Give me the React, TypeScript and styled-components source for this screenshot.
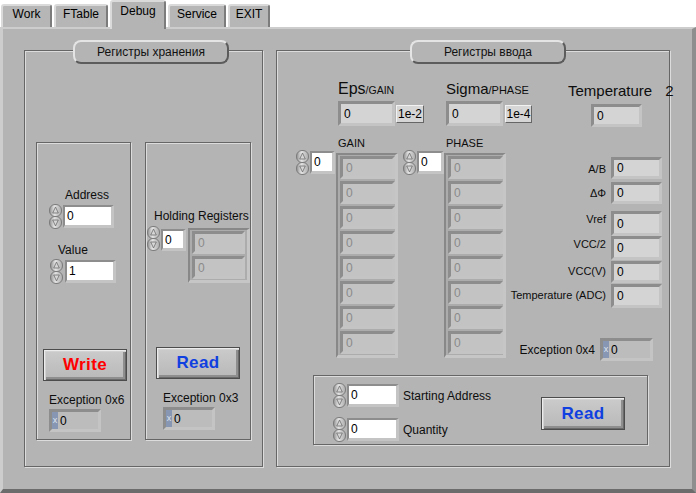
import React, { useId } from "react";
import styled, { createGlobalStyle } from "styled-components";

const PANEL = "#b4b4b4";

const GlobalStyle = createGlobalStyle`
  html, body { margin: 0; padding: 0; background: #ffffff; }
  body {
    font-family: "Liberation Sans", Arial, sans-serif;
    font-size: 12px;
    color: #000;
  }
  *, *::before, *::after { box-sizing: border-box; }
`;

// --- Tabs ---
const Screen = styled.div`
  width: 696px;
  height: 493px;
  display: flex;
  flex-direction: column;
  overflow: hidden;
`;

const TabBar = styled.div`
  height: 27px;
  display: flex;
  align-items: flex-end;
  gap: 2px;
  padding-left: 1px;
  position: relative;
  z-index: 2;
`;

const Tab = styled.div<{ $w: number; $active?: boolean }>`
  width: ${(p) => p.$w}px;
  height: ${(p) => (p.$active ? 29 : 23)}px;
  margin-bottom: ${(p) => (p.$active ? -2 : 0)}px;
  padding-top: ${(p) => (p.$active ? 2 : 1)}px;
  display: flex;
  justify-content: center;
  background: ${(p) => (p.$active ? PANEL : "#b6b6b6")};
  border: 2px solid;
  border-bottom: none;
  border-color: #dadada #7c7c7c transparent #dadada;
  border-radius: 3px 3px 0 0;
  font-size: 12px;
  line-height: 14px;
`;

// --- Panel & group boxes ---
const Panel = styled.div`
  position: relative;
  z-index: 1;
  width: 696px;
  height: 466px;
  background: ${PANEL};
  border-style: solid;
  border-width: 2px 4px 4px 3px;
  border-color: #cdcdcd #8e8e8e #6c6c6c #cdcdcd;
  display: flex;
  align-items: flex-start;
  gap: 13px;
  padding: 21px 0 0 21px;
`;

const Etched = styled.div<{ $w: number; $h: number; $ml?: number }>`
  position: relative;
  flex-shrink: 0;
  width: ${(p) => p.$w}px;
  height: ${(p) => p.$h}px;
  margin-left: ${(p) => p.$ml ?? 0}px;
  border: 1px solid #666666;
  box-shadow: inset 1px 1px 0 #dcdcdc, 1px 1px 0 #dcdcdc;
`;

const GroupTitle = styled.div<{ $left: number; $w: number }>`
  position: absolute;
  top: -11px;
  left: ${(p) => p.$left}px;
  width: ${(p) => p.$w}px;
  height: 24px;
  border-radius: 8px;
  background: ${PANEL};
  border: 2px solid;
  border-color: #e4e4e4 #5c5c5c #5c5c5c #e4e4e4;
  display: flex;
  align-items: center;
  justify-content: center;
  font-size: 12px;
  color: #111;
`;

const Stack = styled.div<{ $ml?: number }>`
  display: flex;
  flex-direction: column;
  align-items: flex-start;
  margin-left: ${(p) => p.$ml ?? 0}px;
`;

const Row = styled.div<{ $mt?: number; $ml?: number; $gap?: number; $align?: string }>`
  display: flex;
  align-items: ${(p) => p.$align ?? "center"};
  gap: ${(p) => p.$gap ?? 0}px;
  margin-top: ${(p) => p.$mt ?? 0}px;
  margin-left: ${(p) => p.$ml ?? 0}px;
`;

const Label = styled.div<{ $mt?: number; $ml?: number; $size?: number; $lh?: number }>`
  margin-top: ${(p) => p.$mt ?? 0}px;
  margin-left: ${(p) => p.$ml ?? 0}px;
  font-size: ${(p) => p.$size ?? 12}px;
  line-height: ${(p) => p.$lh ?? 14}px;
  white-space: nowrap;
  color: #0d0d0d;
`;

// --- Numeric fields ---
type Kind = "control" | "indicator" | "disabled" | "error";

const FIELD_BG: Record<Kind, string> = {
  control: "#ffffff",
  indicator: "#d4d4d4",
  disabled: "#c3c3c3",
  error: "#bcbcbc",
};

const Field = styled.div<{ $w: number; $h: number; $kind: Kind; $ml?: number; $mt?: number }>`
  flex-shrink: 0;
  width: ${(p) => p.$w}px;
  height: ${(p) => p.$h}px;
  margin-left: ${(p) => p.$ml ?? 0}px;
  margin-top: ${(p) => p.$mt ?? 0}px;
  border-style: solid;
  border-width: ${(p) => (p.$kind === "control" ? "2px 3px 3px 2px" : "3px")};
  border-color: #8d8d8d #c4c4c4 #c4c4c4 #8d8d8d;
  background: ${(p) => FIELD_BG[p.$kind]};
  color: ${(p) => (p.$kind === "disabled" ? "#8a8a8a" : "#000")};
  display: flex;
  align-items: center;
  padding-left: ${(p) => (p.$kind === "control" ? 2 : 3)}px;
  font-size: 12px;
  line-height: 14px;
`;

const XTag = styled.span`
  align-self: stretch;
  width: 6px;
  margin-left: -3px;
  margin-right: 2px;
  background: #8796b2;
  color: #dfe5ef;
  font-size: 9px;
  line-height: 16px;
  text-align: center;
`;

const UnitTag = styled.div<{ $w: number; $ml: number }>`
  width: ${(p) => p.$w}px;
  height: 18px;
  margin-left: ${(p) => p.$ml}px;
  background: #d6d6d6;
  border: 1px solid;
  border-color: #f2f2f2 #666666 #666666 #f2f2f2;
  display: flex;
  align-items: center;
  justify-content: center;
  font-size: 12px;
`;

const ArrayFrame = styled.div<{ $mt?: number; $ml?: number }>`
  width: 62px;
  margin-top: ${(p) => p.$mt ?? 0}px;
  margin-left: ${(p) => p.$ml ?? 0}px;
  display: flex;
  flex-direction: column;
  gap: 2px;
  padding: 1px 0 1px 2px;
  background: #acacac;
  border-style: solid;
  border-width: 2px 3px 3px 2px;
  border-color: #888888 #c6c6c6 #c6c6c6 #888888;
`;

const SpinnerSvg = styled.svg`
  flex-shrink: 0;
  display: block;
`;

function Spinner() {
  const id = "g" + useId().replace(/[^a-zA-Z0-9]/g, "");
  return (
    <SpinnerSvg width="13" height="25" viewBox="0 0 13 25">
      <defs>
        <linearGradient id={id} x1="0" x2="1" y1="0" y2="0">
          <stop offset="0" stopColor="#8f8f8f" />
          <stop offset="0.4" stopColor="#e4e4e4" />
          <stop offset="1" stopColor="#ababab" />
        </linearGradient>
      </defs>
      <rect x="0.5" y="0.5" width="12" height="12" rx="5.5" fill={`url(#${id})`} stroke="#7c7c7c" />
      <rect x="0.5" y="12.5" width="12" height="12" rx="5.5" fill={`url(#${id})`} stroke="#7c7c7c" />
      <path d="M6.5 3 L9.3 9 L3.7 9 Z" fill="#d6d6d6" stroke="#6c6c6c" strokeWidth="0.8" />
      <path d="M6.5 22 L9.3 16 L3.7 16 Z" fill="#d6d6d6" stroke="#6c6c6c" strokeWidth="0.8" />
    </SpinnerSvg>
  );
}

const Button = styled.div<{ $color: string; $w: number; $h: number; $mt?: number; $ml?: number; $mr?: number }>`
  flex-shrink: 0;
  width: ${(p) => p.$w}px;
  height: ${(p) => p.$h}px;
  margin-top: ${(p) => p.$mt ?? 0}px;
  margin-left: ${(p) => (p.$ml === undefined ? "auto" : `${p.$ml}px`)};
  margin-right: ${(p) => p.$mr ?? 0}px;
  display: flex;
  align-items: center;
  justify-content: center;
  background: linear-gradient(#cbcbcb, #b8b8b8);
  border: 1px solid #4c4c4c;
  box-shadow: inset 1px 1px 0 #ececec, inset 2px 2px 0 #d2d2d2,
    inset -1px -1px 0 #6a6a6a, inset -3px -3px 0 #8e8e8e;
  color: ${(p) => p.$color};
  font-weight: bold;
  font-size: 17px;
  letter-spacing: 0.4px;
`;

// --- Left group ---
const LeftBody = styled.div`
  display: flex;
  gap: 14px;
  padding: 91px 0 0 11px;
`;

// --- Right group ---
const Header = styled.div`
  display: flex;
  height: 48px;
  margin-top: 29px;
  padding-left: 61px;
`;

const Block = styled.div<{ $ml?: number }>`
  display: flex;
  flex-direction: column;
  align-items: flex-start;
  margin-left: ${(p) => p.$ml ?? 0}px;
`;

const BigLabel = styled.div<{ $size: number; $mt?: number }>`
  font-size: ${(p) => p.$size}px;
  line-height: 18px;
  margin-top: ${(p) => p.$mt ?? 0}px;
  white-space: nowrap;
  color: #0d0d0d;
`;

const Sub = styled.span<{ $ml?: number; $size?: number }>`
  font-size: ${(p) => p.$size ?? 10.5}px;
  margin-left: ${(p) => p.$ml ?? 0}px;
`;

const Body = styled.div`
  display: flex;
  align-items: flex-start;
  height: 238px;
  margin-top: 9px;
  padding-left: 19px;
`;

const IndColumn = styled.div`
  width: 155px;
  margin-left: 1px;
  padding-top: 20px;
  display: flex;
  flex-direction: column;
`;

const IndRow = styled.div<{ $mt: number; $pr?: number }>`
  display: flex;
  justify-content: flex-end;
  align-items: flex-start;
  gap: 5px;
  margin-top: ${(p) => p.$mt}px;
  padding-right: ${(p) => p.$pr ?? 0}px;
`;

const BottomInner = styled.div`
  display: flex;
  align-items: flex-start;
`;

const BottomControls = styled.div`
  display: flex;
  flex-direction: column;
  gap: 9px;
  padding: 7px 0 0 19px;
`;

function NumCtrl({ w, mt, ml, value = "0", gap = 1 }: { w: number; mt?: number; ml?: number; value?: string; gap?: number }) {
  return (
    <Row $mt={mt} $ml={ml} $gap={gap}>
      <Spinner />
      <Field $kind="control" $w={w} $h={23}>{value}</Field>
    </Row>
  );
}

function ErrInd({ w, mt, ml }: { w: number; mt?: number; ml?: number }) {
  return (
    <Field $kind="error" $w={w} $h={23} $mt={mt} $ml={ml}>
      <XTag>x</XTag>0
    </Field>
  );
}

function DataArray({ count, mt, ml }: { count: number; mt?: number; ml?: number }) {
  return (
    <ArrayFrame $mt={mt} $ml={ml}>
      {Array.from({ length: count }).map((_, i) => (
        <Field key={i} $kind="disabled" $w={55} $h={23}>0</Field>
      ))}
    </ArrayFrame>
  );
}

function IndexedArray({ title, fieldW, ml, gap }: { title: string; fieldW: number; ml?: number; gap: number }) {
  return (
    <Row $ml={ml} $align="flex-start">
      <NumCtrl w={fieldW} mt={13} />
      <Stack $ml={gap}>
        <Label $ml={2} $size={11} $lh={13}>{title}</Label>
        <DataArray count={8} mt={3} />
      </Stack>
    </Row>
  );
}

const indicators = [
  { label: "A/B", mt: 0, lmt: 5, h: 22 },
  { label: "ΔΦ", mt: 3, lmt: 4, h: 22 },
  { label: "Vref", mt: 7, lmt: 1, h: 25 },
  { label: "VCC/2", mt: 0, lmt: 1, h: 24 },
  { label: "VCC(V)", mt: 1, lmt: 3, h: 22 },
  { label: "Temperature (ADC)", mt: 1, lmt: 4, h: 24 },
];

export default function App() {
  return (
    <>
      <GlobalStyle />
      <Screen>
        <TabBar>
          <Tab $w={51}>Work</Tab>
          <Tab $w={54}>FTable</Tab>
          <Tab $w={56} $active>Debug</Tab>
          <Tab $w={58}>Service</Tab>
          <Tab $w={42}>EXIT</Tab>
        </TabBar>
        <Panel>
          {/* Регистры хранения */}
          <Etched $w={239} $h={417}>
            <GroupTitle $left={48} $w={156}>Регистры хранения</GroupTitle>
            <LeftBody>
              <Etched $w={95} $h={298}>
                <Stack>
                  <Label $mt={45} $ml={28}>Address</Label>
                  <NumCtrl w={51} mt={2} ml={12} />
                  <Label $mt={14} $ml={21}>Value</Label>
                  <NumCtrl w={51} mt={2} ml={13} value="1" gap={2} />
                  <Button $color="#ff0000" $w={84} $h={32} $mt={65} $ml={6}>Write</Button>
                  <Label $mt={12} $ml={12}>Exception 0x6</Label>
                  <ErrInd w={52} mt={2} ml={12} />
                </Stack>
              </Etched>
              <Etched $w={106} $h={298}>
                <Stack>
                  <Label $mt={66} $ml={8}>Holding Registers</Label>
                  <Row $mt={3} $ml={1} $align="flex-start">
                    <Spinner />
                    <Field $kind="control" $w={25} $h={22} $mt={3} $ml={1}>0</Field>
                    <ArrayFrame $mt={2} $ml={2}>
                      <Field $kind="disabled" $w={53} $h={23}>0</Field>
                      <Field $kind="disabled" $w={53} $h={23}>0</Field>
                    </ArrayFrame>
                  </Row>
                  <Button $color="#1040e0" $w={84} $h={32} $mt={64} $ml={10}>Read</Button>
                  <Label $mt={12} $ml={17}>Exception 0x3</Label>
                  <ErrInd w={52} mt={2} ml={17} />
                </Stack>
              </Etched>
            </LeftBody>
          </Etched>

          {/* Регистры ввода */}
          <Etched $w={394} $h={417}>
            <GroupTitle $left={133} $w={156}>Регистры ввода</GroupTitle>
            <Header>
              <Block>
                <BigLabel $size={16}>Eps<Sub>/GAIN</Sub></BigLabel>
                <Row $mt={2}>
                  <Field $kind="indicator" $w={57} $h={25}>0</Field>
                  <UnitTag $w={28} $ml={1}>1e-2</UnitTag>
                </Row>
              </Block>
              <Block $ml={22}>
                <BigLabel $size={15}>Sigma<Sub $size={11}>/PHASE</Sub></BigLabel>
                <Row $mt={2}>
                  <Field $kind="indicator" $w={57} $h={25}>0</Field>
                  <UnitTag $w={27} $ml={2}>1e-4</UnitTag>
                </Row>
              </Block>
              <Block $ml={36}>
                <BigLabel $size={15} $mt={2}>
                  Temperature<Sub $size={15} $ml={13}>2</Sub>
                </BigLabel>
                <Field $kind="indicator" $w={51} $h={23} $ml={23} $mt={4}>0</Field>
              </Block>
            </Header>

            <Body>
              <IndexedArray title="GAIN" fieldW={25} gap={1} />
              <IndexedArray title="PHASE" fieldW={27} gap={0} ml={5} />
              <IndColumn>
                {indicators.map((it) => (
                  <IndRow key={it.label} $mt={it.mt}>
                    <Label $size={11} $mt={it.lmt}>{it.label}</Label>
                    <Field $kind="indicator" $w={51} $h={it.h}>0</Field>
                  </IndRow>
                ))}
                <IndRow $mt={30} $pr={9}>
                  <Label $mt={5}>Exception 0x4</Label>
                  <ErrInd w={53} />
                </IndRow>
              </IndColumn>
            </Body>

            <Etched $w={335} $h={70} $ml={36}>
              <BottomInner>
                <BottomControls>
                  <Row $gap={1}>
                    <Spinner />
                    <Field $kind="control" $w={52} $h={23}>0</Field>
                    <Label $ml={3}>Starting Address</Label>
                  </Row>
                  <Row $gap={1}>
                    <Spinner />
                    <Field $kind="control" $w={52} $h={23}>0</Field>
                    <Label $ml={3}>Quantity</Label>
                  </Row>
                </BottomControls>
                <Button $color="#1040e0" $w={84} $h={33} $mt={21} $mr={22}>Read</Button>
              </BottomInner>
            </Etched>
          </Etched>
        </Panel>
      </Screen>
    </>
  );
}
